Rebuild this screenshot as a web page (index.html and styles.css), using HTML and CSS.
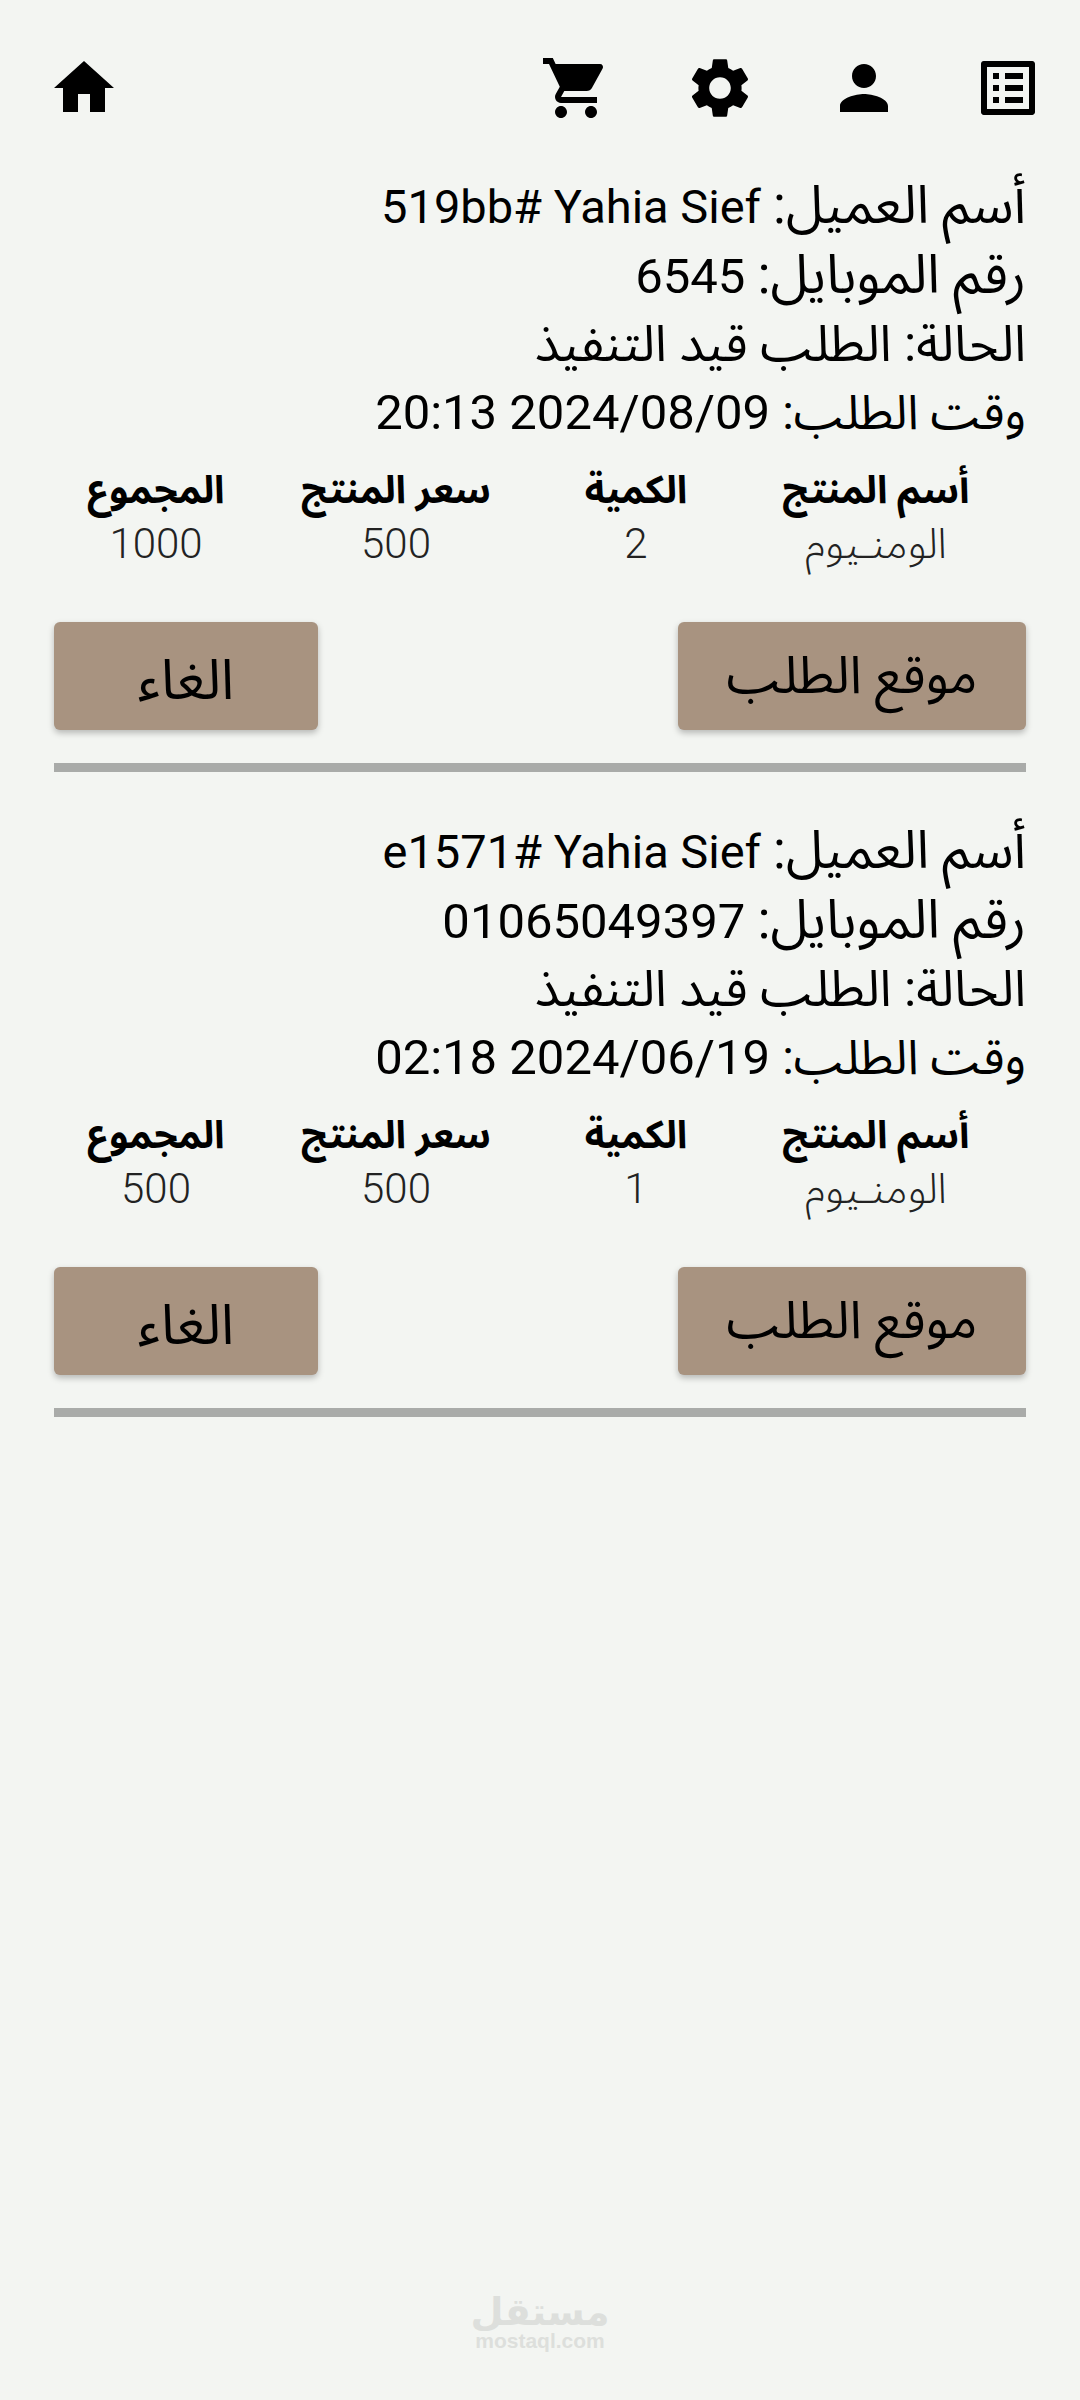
FILE: index.html
```html
<!DOCTYPE html>
<html lang="ar">
<head>
<meta charset="utf-8">
<title>Orders</title>
<link rel="stylesheet" href="styles.css">
</head>
<body>
<div class="topbar">
	<div class="topbar_group">
		<svg class="icon" viewBox="0 0 24 24"><path d="M19 5v14H5V5h14m1.1-2H3.9c-.5 0-.9.4-.9.9v16.2c0 .4.4.9.9.9h16.2c.4 0 .9-.5.9-.9V3.9c0-.5-.5-.9-.9-.9zM11 7h6v2h-6V7zm0 4h6v2h-6v-2zm0 4h6v2h-6zM7 7h2v2H7zm0 4h2v2H7zm0 4h2v2H7z"/></svg>
		<svg class="icon" viewBox="0 0 24 24"><path d="M12 12c2.21 0 4-1.79 4-4s-1.79-4-4-4-4 1.79-4 4 1.79 4 4 4zm0 2c-2.67 0-8 1.34-8 4v2h16v-2c0-2.66-5.33-4-8-4z"/></svg>
		<svg class="icon" viewBox="0 0 24 24"><path d="M19.14 12.94c.04-.3.06-.61.06-.94 0-.32-.02-.64-.07-.94l2.03-1.58c.18-.14.23-.41.12-.61l-1.92-3.32c-.12-.22-.37-.29-.59-.22l-2.39.96c-.5-.38-1.03-.7-1.62-.94L14.4 2.81c-.04-.24-.24-.41-.48-.41h-3.84c-.24 0-.43.17-.47.41L9.25 5.35c-.59.24-1.13.57-1.62.94l-2.39-.96c-.22-.08-.47 0-.59.22L2.74 8.87c-.12.21-.08.47.12.61l2.03 1.58c-.05.3-.09.63-.09.94s.02.64.07.94l-2.03 1.58c-.18.14-.23.41-.12.61l1.92 3.32c.12.22.37.29.59.22l2.39-.96c.5.38 1.03.7 1.62.94l.36 2.54c.05.24.24.41.48.41h3.84c.24 0 .44-.17.47-.41l.36-2.54c.59-.24 1.13-.56 1.62-.94l2.39.96c.22.08.47 0 .59-.22l1.92-3.32c.12-.22.07-.47-.12-.61l-2.01-1.58zM12 15.6c-1.98 0-3.6-1.62-3.6-3.6s1.62-3.6 3.6-3.6 3.6 1.62 3.6 3.6-1.62 3.6-3.6 3.6z"/></svg>
		<svg class="icon" viewBox="0 0 24 24"><path d="M15.55 13c.75 0 1.41-.41 1.75-1.03l3.58-6.49A.996.996 0 0 0 20.01 4H5.21l-.94-2H1v2h2l3.6 7.59-1.35 2.44C4.52 15.37 5.48 17 7 17h12v-2H7l1.1-2h7.45zM7 18c-1.1 0-1.99.9-1.99 2S5.9 22 7 22s2-.9 2-2-.9-2-2-2zm10 0c-1.1 0-1.99.9-1.99 2s.89 2 1.99 2 2-.9 2-2-.9-2-2-2z"/></svg>
	</div>
	<svg class="icon" viewBox="0 0 24 24"><path d="M10 20v-6h4v6h5v-8h3L12 3 2 12h3v8z"/></svg>
</div>

<div class="order">
	<div class="order_info">
		<div class="info_row"><span class="label_lg">أسم العميل:</span> <span class="latin">519bb# Yahia Sief</span></div>
		<div class="info_row"><span class="label_xl">رقم الموبايل:</span> 6545</div>
		<div class="info_row"><span class="label_md">الحالة: الطلب قيد التنفيذ</span></div>
		<div class="info_row"><span class="label_sm">وقت الطلب:</span> 2024/08/09 20:13</div>
	</div>
	<div class="items">
		<div class="items_head">أسم المنتج</div>
		<div class="items_head">الكمية</div>
		<div class="items_head">سعر المنتج</div>
		<div class="items_head">المجموع</div>
		<div class="items_val">الومنـيوم</div>
		<div class="items_val">2</div>
		<div class="items_val">500</div>
		<div class="items_val">1000</div>
	</div>
	<div class="actions">
		<button class="btn btn_wide">موقع الطلب</button>
		<button class="btn btn_small">الغاء</button>
	</div>
	<div class="divider"></div>
</div>

<div class="order">
	<div class="order_info">
		<div class="info_row"><span class="label_lg">أسم العميل:</span> <span class="latin">e1571# Yahia Sief</span></div>
		<div class="info_row"><span class="label_xl">رقم الموبايل:</span> 01065049397</div>
		<div class="info_row"><span class="label_md">الحالة: الطلب قيد التنفيذ</span></div>
		<div class="info_row"><span class="label_sm">وقت الطلب:</span> 2024/06/19 02:18</div>
	</div>
	<div class="items">
		<div class="items_head">أسم المنتج</div>
		<div class="items_head">الكمية</div>
		<div class="items_head">سعر المنتج</div>
		<div class="items_head">المجموع</div>
		<div class="items_val">الومنـيوم</div>
		<div class="items_val">1</div>
		<div class="items_val">500</div>
		<div class="items_val">500</div>
	</div>
	<div class="actions">
		<button class="btn btn_wide">موقع الطلب</button>
		<button class="btn btn_small">الغاء</button>
	</div>
	<div class="divider"></div>
</div>

<div class="watermark">
	<div class="watermark_ar">مستقل</div>
	<div class="watermark_en">mostaql.com</div>
</div>
</body>
</html>
```

FILE: styles.css
```css
html, body {
	margin: 0;
	padding: 0;
}

body {
	position: relative;
	width: 1080px;
	height: 2400px;
	overflow: hidden;
	background-color: #F3F5F2;
	color: #000;
	font-family: Roboto, "Noto Sans Arabic", "Noto Kufi Arabic", Cairo, "Noto Sans", "DejaVu Sans", sans-serif;
	direction: rtl;
}

.topbar {
	display: flex;
	justify-content: space-between;
	padding: 52px 36px 0 48px;
	height: 119px;
}

.topbar_group {
	display: flex;
	gap: 72px;
}

.icon {
	display: block;
	width: 72px;
	height: 72px;
	fill: #000;
}

.order {
	padding: 0 54px;
	height: 645px;
}

.order_info {
	font-size: 49px;
}

.info_row {
	height: 69px;
	line-height: 69px;
}

.latin {
	font-size: 47px;
}

.label_xl {
	font-size: 54px;
}

.label_lg {
	font-size: 53px;
}

.label_md {
	font-size: 50.5px;
}

.label_sm {
	font-size: 48px;
}

.items {
	display: grid;
	grid-template-columns: repeat(4, 240px);
	margin: 0 30px 0 -12px;
	padding-top: 16px;
	text-align: center;
}

.items_head {
	font-size: 38.5px;
	font-weight: bold;
	line-height: 54px;
}

.items_val {
	font-size: 42px;
	font-weight: 300;
	line-height: 54px;
	color: #222;
}

.actions {
	display: flex;
	justify-content: space-between;
	margin-top: 51px;
}

.btn {
	height: 108px;
	border: 0;
	border-radius: 6px;
	background-color: #A89380;
	box-shadow: 0 3px 6px rgba(0,0,0,0.25);
	color: #000;
	font-family: inherit;
	font-size: 52px;
	padding: 0 0 5px;
}

.btn_wide {
	width: 348px;
}

.btn_small {
	width: 264px;
	font-size: 56px;
}

.divider {
	height: 9px;
	margin-top: 33px;
	background-color: #A9ABA9;
}

.watermark {
	position: absolute;
	left: 440px;
	top: 2294px;
	width: 200px;
	text-align: center;
	direction: ltr;
	color: #DDDFDC;
	font-family: "Liberation Sans", "DejaVu Sans", sans-serif;
	font-weight: bold;
}

.watermark_ar {
	font-size: 38px;
	line-height: 36px;
}

.watermark_en {
	font-size: 21px;
	line-height: 22px;
}
```
